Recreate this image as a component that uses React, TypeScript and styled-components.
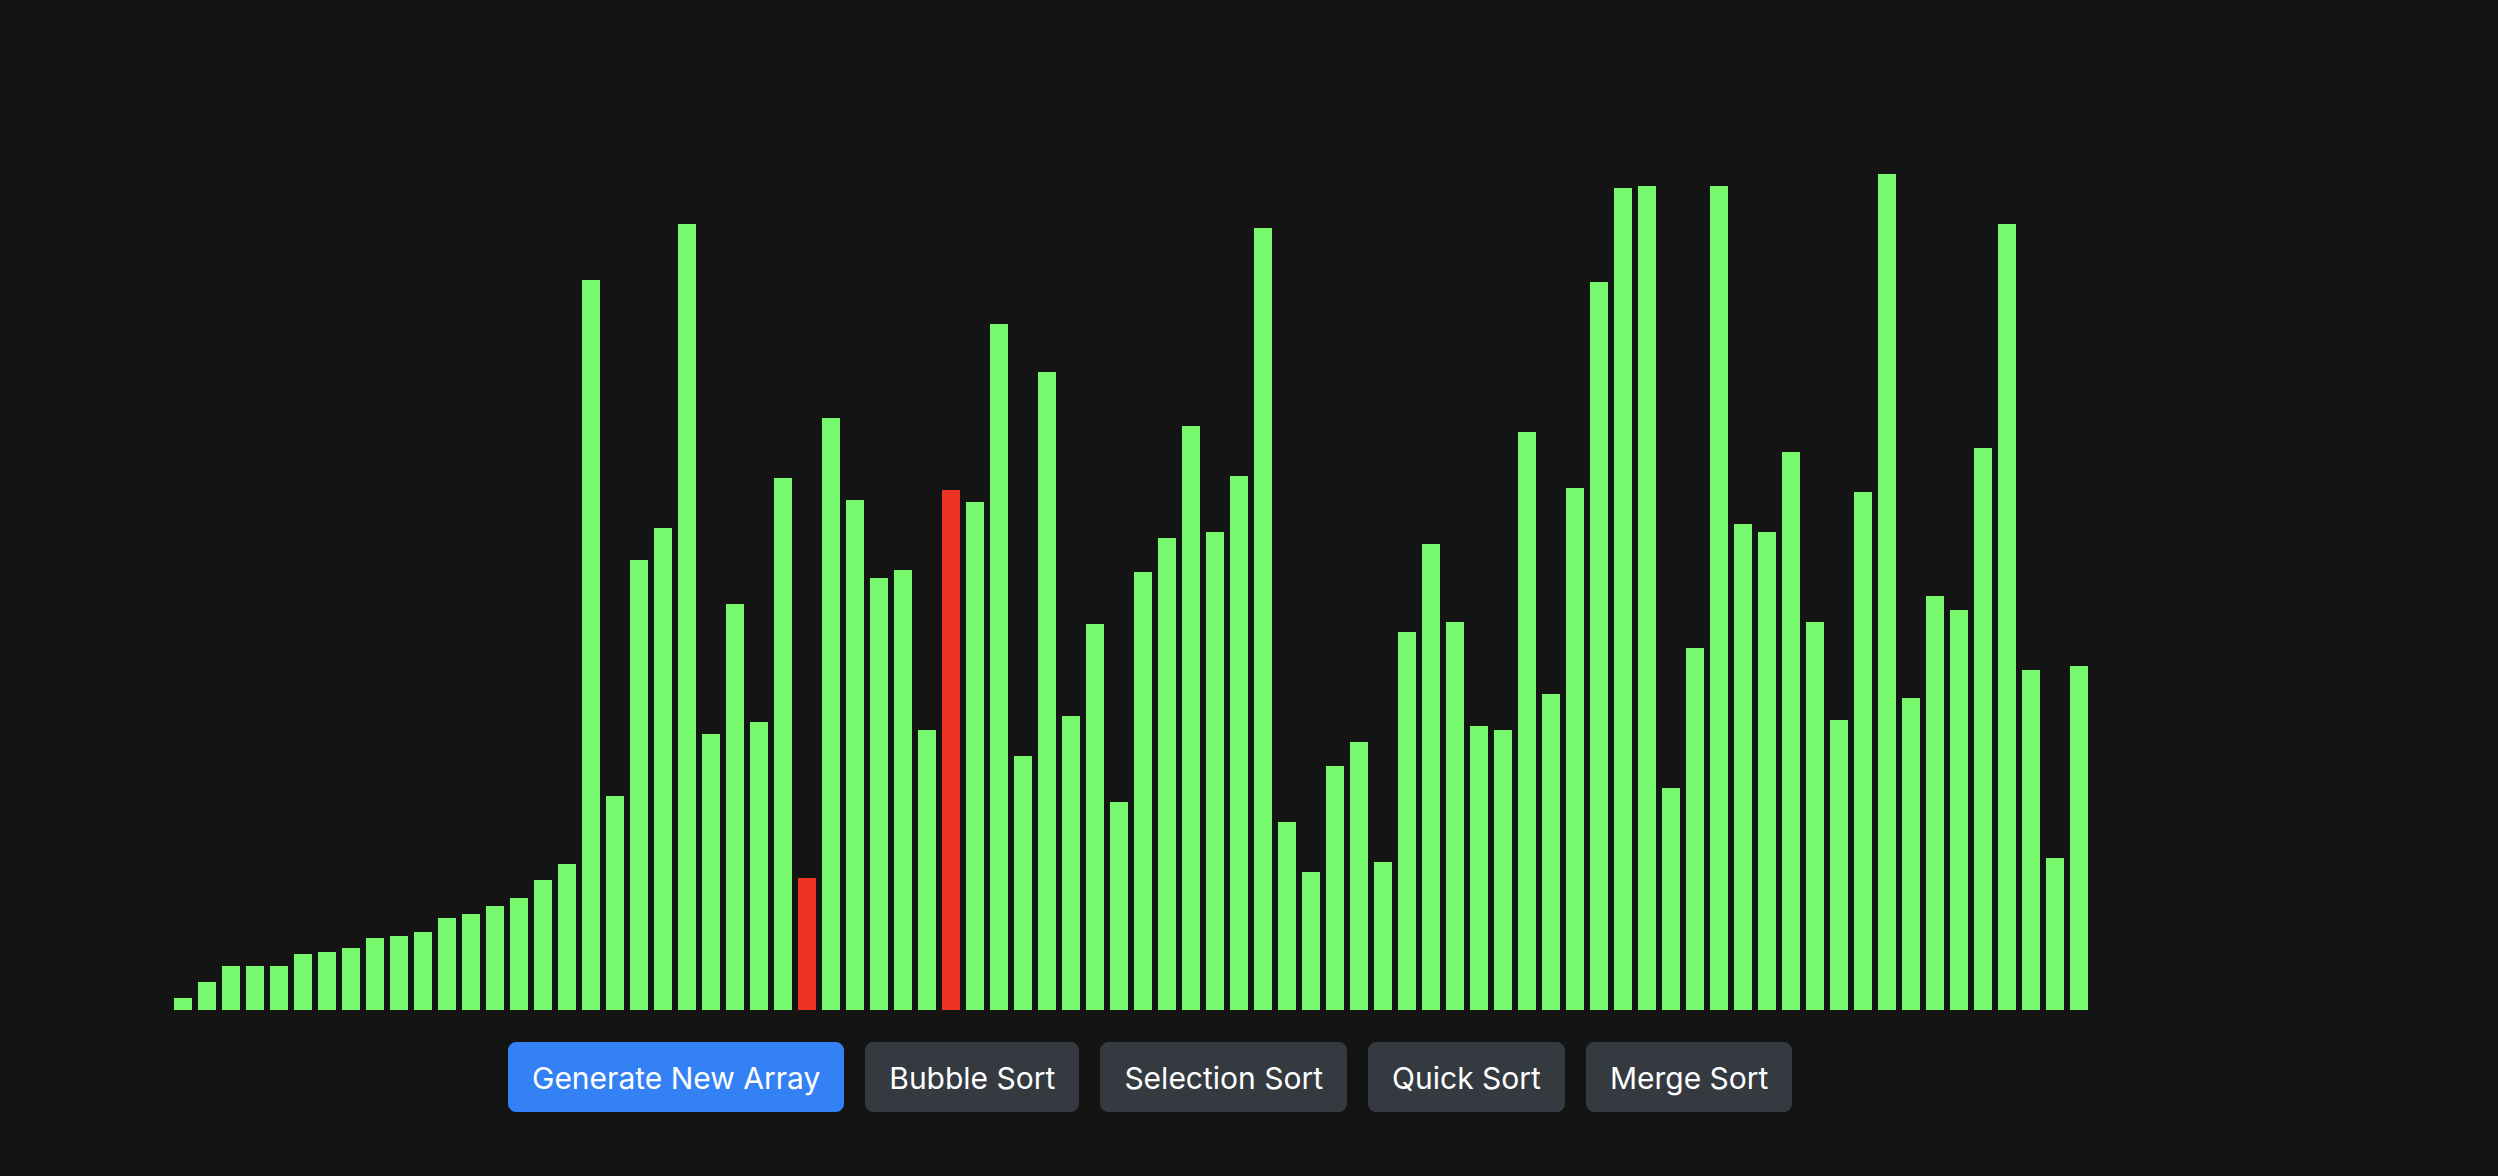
import React from 'react';
import styled, { createGlobalStyle } from 'styled-components';

const heights = [
  12, 28, 44, 44, 44, 56, 58, 62, 72, 74, 78, 92, 96, 104, 112, 130, 146, 730, 214, 450,
  482, 786, 276, 406, 288, 532, 132, 592, 510, 432, 440, 280, 520, 508, 686, 254, 638, 294, 386, 208,
  438, 472, 584, 478, 534, 782, 188, 138, 244, 268, 148, 378, 466, 388, 284, 280, 578, 316, 522, 728,
  822, 824, 222, 362, 824, 486, 478, 558, 388, 290, 518, 836, 312, 414, 400, 562, 786, 340, 152, 344,
];

// indexes being compared right now
const active = [26, 32];

const GlobalStyle = createGlobalStyle`
  html,
  body,
  #root {
    height: 100%;
  }

  body {
    margin: 0;
    background: #141414;
    font-family: Inter, "Noto Sans", sans-serif;
  }
`;

const Page = styled.div`
  display: flex;
  flex-direction: column;
  min-height: 100vh;
`;

const ArrayContainer = styled.div`
  display: flex;
  align-items: flex-end;
  height: 1010px;
  padding-left: 171px;
  box-sizing: border-box;
`;

const Bar = styled.div<{ $active: boolean }>`
  width: 18px;
  margin: 0 3px;
  background: ${(props) => (props.$active ? '#ee3325' : '#77f96e')};
`;

const Toolbar = styled.div`
  display: flex;
  gap: 21px;
  margin-top: 32px;
  padding-left: 508px;
`;

const Button = styled.button<{ $primary?: boolean }>`
  font-family: Inter, "Noto Sans", sans-serif;
  font-size: 30px;
  line-height: 1.5;
  padding: 13px 23px 10px;
  border: 1px solid ${(props) => (props.$primary ? '#3381f4' : '#343a40')};
  border-radius: 8px;
  background: ${(props) => (props.$primary ? '#3381f4' : '#343a40')};
  color: #fff;
  cursor: pointer;
`;

const App = () => {
  return (
    <React.Fragment>
      <GlobalStyle />
      <Page>
        <ArrayContainer>
          {heights.map((h, i) => (
            <Bar key={i} $active={active.includes(i)} style={{ height: h }} />
          ))}
        </ArrayContainer>
        <Toolbar>
          <Button $primary>Generate New Array</Button>
          <Button>Bubble Sort</Button>
          <Button>Selection Sort</Button>
          <Button>Quick Sort</Button>
          <Button>Merge Sort</Button>
        </Toolbar>
      </Page>
    </React.Fragment>
  );
};

export default App;
